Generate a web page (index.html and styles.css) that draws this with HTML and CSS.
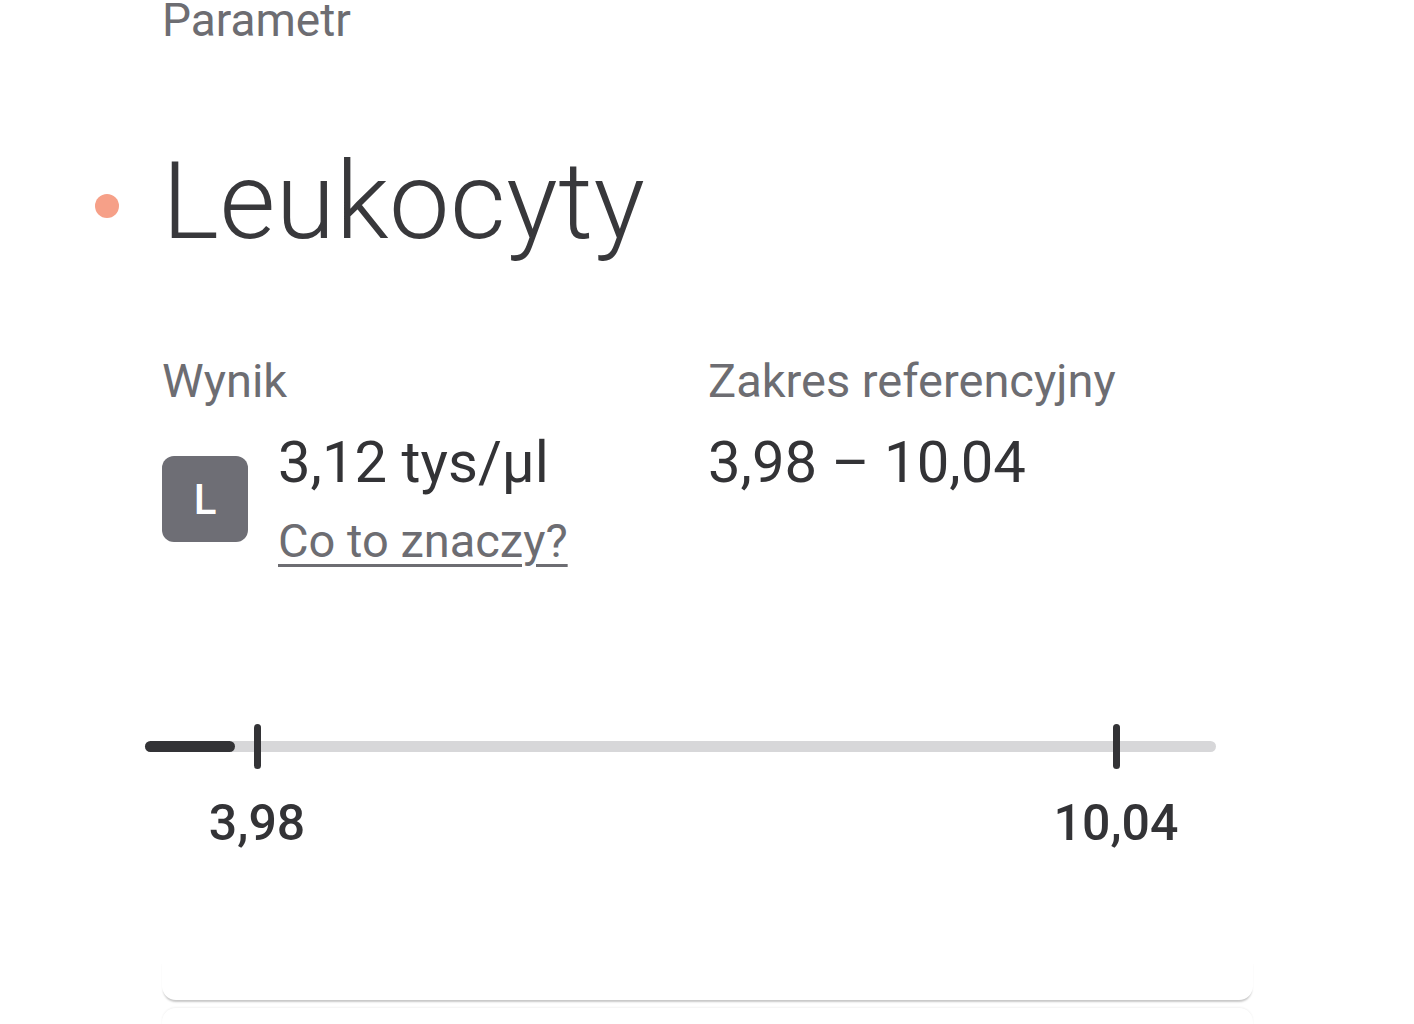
FILE: index.html
```html
<!DOCTYPE html>
<html lang="pl">
<head>
<meta charset="utf-8">
<title>Leukocyty</title>
<link rel="stylesheet" href="styles.css">
</head>
<body>
<main class="page">
  <div class="eyebrow">Parametr</div>
  <div class="title-row">
    <span class="dot"></span>
    <h1 class="title">Leukocyty</h1>
  </div>
  <section class="results">
    <div class="col col-left">
      <div class="label">Wynik</div>
      <div class="result">
        <div class="badge">L</div>
        <div class="result-text">
          <div class="value">3,12 tys/µl</div>
          <a class="link" href="#">Co to znaczy?</a>
        </div>
      </div>
    </div>
    <div class="col">
      <div class="label">Zakres referencyjny</div>
      <div class="value range">3,98 – 10,04</div>
    </div>
  </section>
  <div class="scale">
    <div class="track">
      <div class="fill"></div>
    </div>
    <span class="tick" style="left:112px"></span>
    <span class="tick" style="left:971px"></span>
  </div>
  <div class="scale-labels">
    <span class="scale-label" style="left:112px">3,98</span>
    <span class="scale-label" style="left:971px">10,04</span>
  </div>
  <div class="card-edge"></div>
  <div class="card-next"></div>
</main>
</body>
</html>
```

FILE: styles.css
```css
html, body {
  margin: 0;
  padding: 0;
  background: #ffffff;
}

body {
  font-family: Roboto, "Noto Sans", Arial, sans-serif;
  color: #333336;
  overflow: hidden;
}

.page {
  width: 1414px;
  height: 1024px;
  position: relative;
}

.eyebrow {
  margin-left: 162px;
  font-size: 46px;
  line-height: 40px;
  color: #6d6d72;
}

.title-row {
  display: flex;
  align-items: center;
  margin-top: 101px;
  margin-left: 95px;
  height: 120px;
}

.dot {
  width: 24px;
  height: 24px;
  border-radius: 50%;
  background: #f6a088;
  margin-top: 10px;
  flex: none;
}

.title {
  margin: 0 0 0 43px;
  font-size: 108px;
  line-height: 120px;
  font-weight: 300;
  color: #38383b;
  letter-spacing: 0.5px;
}

.results {
  display: grid;
  grid-template-columns: 546px auto;
  margin-left: 162px;
  margin-top: 95px;
}

.label {
  font-size: 47px;
  line-height: 50px;
  color: #6d6d72;
}

.result {
  display: flex;
  align-items: flex-start;
  gap: 30px;
  margin-top: 24px;
}

.badge {
  width: 86px;
  height: 86px;
  margin-top: 26px;
  border-radius: 12px;
  background: #6e6e75;
  color: #ffffff;
  font-size: 42px;
  font-weight: 500;
  display: flex;
  align-items: center;
  justify-content: center;
  flex: none;
}

.result-text {
  display: flex;
  flex-direction: column;
}

.value {
  font-size: 58px;
  line-height: 64px;
  color: #333336;
}

.range {
  margin-top: 24px;
}

.link {
  margin-top: 22px;
  font-size: 47px;
  line-height: 50px;
  color: #6d6d72;
  text-decoration: underline;
  text-decoration-thickness: 3px;
  text-underline-offset: 7px;
}

.scale {
  position: relative;
  margin-left: 145px;
  margin-top: 158px;
  width: 1071px;
  height: 45px;
  display: flex;
  align-items: center;
}

.track {
  width: 100%;
  height: 11px;
  border-radius: 6px;
  background: #d7d7d9;
  display: flex;
}

.fill {
  width: 90px;
  height: 100%;
  border-radius: 6px;
  background: #333336;
}

.tick {
  position: absolute;
  top: 0;
  width: 7px;
  height: 45px;
  margin-left: -3px;
  border-radius: 4px;
  background: #333336;
}

.scale-labels {
  position: relative;
  margin-left: 145px;
  margin-top: 26px;
  width: 1071px;
  height: 56px;
}

.scale-label {
  position: absolute;
  top: 0;
  transform: translateX(-50%);
  font-size: 50px;
  line-height: 56px;
  font-weight: 500;
  color: #333336;
}

.card-edge {
  margin-left: 162px;
  margin-top: 109px;
  width: 1091px;
  height: 40px;
  border-radius: 0 0 14px 14px;
  background: #ffffff;
  box-shadow: 0 3px 2px -1px rgba(0, 0, 0, 0.22);
}

.card-next {
  margin-left: 162px;
  margin-top: 8px;
  width: 1091px;
  height: 40px;
  border-radius: 14px 14px 0 0;
  background: #ffffff;
  box-shadow: 0 -1px 2px rgba(0, 0, 0, 0.05);
}
```
